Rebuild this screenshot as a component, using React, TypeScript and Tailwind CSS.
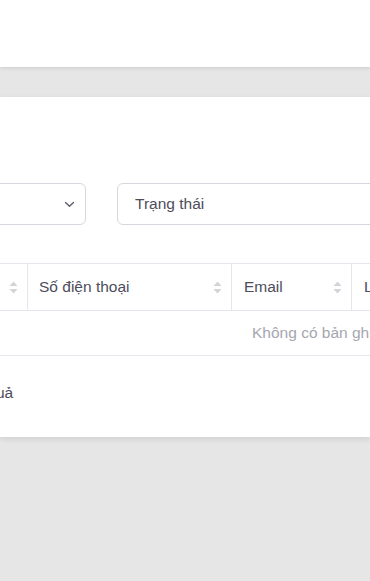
import React from 'react';

// Up/down sort caret used in table headers
const SortIcon = () => (
  <svg width="9" height="13" viewBox="0 0 9 13" className="shrink-0">
    <path d="M4.5 0.5 L8.5 5 L0.5 5 Z" fill="#d3d3d8" />
    <path d="M4.5 12.5 L8.5 8 L0.5 8 Z" fill="#d3d3d8" />
  </svg>
);

const ChevronDown = () => (
  <svg width="11" height="7" viewBox="0 0 11 7" fill="none">
    <path d="M1.5 1.5 L5.5 5.3 L9.5 1.5" stroke="#5a5968" strokeWidth="1.3" strokeLinecap="round" strokeLinejoin="round" />
  </svg>
);

export default function App() {
  return (
    <div className="min-h-[581px] w-[370px] overflow-hidden bg-[#e6e6e6] text-[15.5px] text-[#4e4d5c]" style={{ fontFamily: '"Liberation Sans", Arial, sans-serif' }}>
      {/* top bar */}
      <div className="h-[67px] bg-white shadow-[0_1px_4px_rgba(0,0,0,0.12)]" />

      <div className="pt-[30px]">
        {/* card */}
        <div className="h-[340px] bg-white shadow-[0_2px_6px_rgba(0,0,0,0.1)] pt-[86px]">
          {/* filters */}
          <div className="-ml-[120px] flex gap-[31px]">
            <div className="flex h-[42px] w-[206px] shrink-0 items-center justify-end rounded-[6px] border border-[#d6d6de] pr-[10px]">
              <ChevronDown />
            </div>
            <div className="flex h-[42px] w-[320px] shrink-0 items-center rounded-[6px] border border-[#d6d6de] pl-[17px]">
              Trạng thái
            </div>
          </div>

          {/* table */}
          <div className="mt-[38px] -ml-[199px] w-[700px]">
            <div className="flex h-[48px] border-y border-[#e6e6ec]">
              <div className="flex w-[227px] shrink-0 items-center justify-end border-r border-[#e6e6ec] pr-[9px]">
                <SortIcon />
              </div>
              <div className="flex w-[204px] shrink-0 items-center justify-between border-r border-[#e6e6ec] pl-[11px] pr-[9px]">
                <span>Số điện thoại</span>
                <SortIcon />
              </div>
              <div className="flex w-[120px] shrink-0 items-center justify-between border-r border-[#e6e6ec] pl-[12px] pr-[9px]">
                <span>Email</span>
                <SortIcon />
              </div>
              <div className="flex flex-1 items-center pl-[12px]">
                <span>Loại</span>
              </div>
            </div>
            <div className="flex h-[45px] items-center border-b border-[#e6e6ec] pl-[451px] text-[#a6a6b0]">
              Không có bản ghi
            </div>
          </div>

          {/* footer summary */}
          <div className="mt-[25px] -ml-[98px] whitespace-nowrap">Tổng số kết quả</div>
        </div>
      </div>
    </div>
  );
}
